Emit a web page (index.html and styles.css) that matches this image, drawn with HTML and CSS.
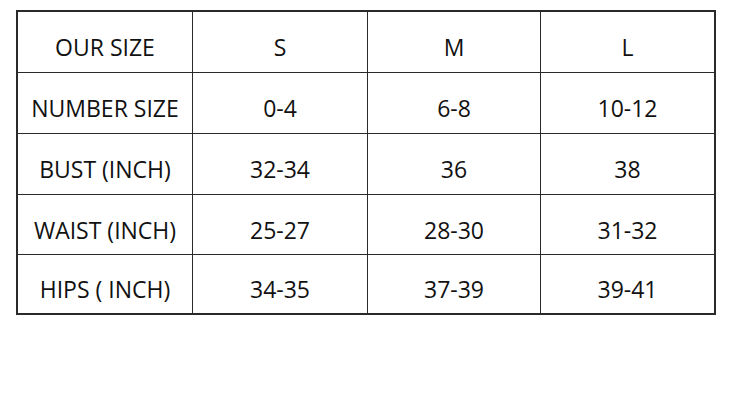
FILE: index.html
```html
<!DOCTYPE html>
<html>
<head>
<meta charset="utf-8">
<link rel="stylesheet" href="styles.css">
</head>
<body>
<div class="page">
  <div class="chart">
    <div class="cell">OUR SIZE</div><div class="cell">S</div><div class="cell">M</div><div class="cell">L</div>
    <div class="cell">NUMBER SIZE</div><div class="cell">0-4</div><div class="cell">6-8</div><div class="cell">10-12</div>
    <div class="cell">BUST (INCH)</div><div class="cell">32-34</div><div class="cell">36</div><div class="cell">38</div>
    <div class="cell">WAIST (INCH)</div><div class="cell">25-27</div><div class="cell">28-30</div><div class="cell">31-32</div>
    <div class="cell">HIPS ( INCH)</div><div class="cell">34-35</div><div class="cell">37-39</div><div class="cell">39-41</div>
  </div>
</div>
</body>
</html>
```
FILE: styles.css
```css
html, body {
  margin: 0;
  background: #ffffff;
}
.page {
  padding: 10px 0 0 16px;
  font-family: "Open Sans", "Liberation Sans", sans-serif;
}
.chart {
  width: 696px;
  height: 301px;
  border: 2px solid #2a2a2a;
  background: #2a2a2a;
  display: grid;
  grid-template-columns: 174px 174px 172px 173px;
  grid-template-rows: 60px 60px 60px 59px 58px;
  gap: 1px;
}
.cell {
  background: #ffffff;
  color: #111111;
  font-size: 23px;
  font-weight: 500;
  display: flex;
  align-items: center;
  justify-content: center;
  padding-top: 10px;
  box-sizing: border-box;
}
```
